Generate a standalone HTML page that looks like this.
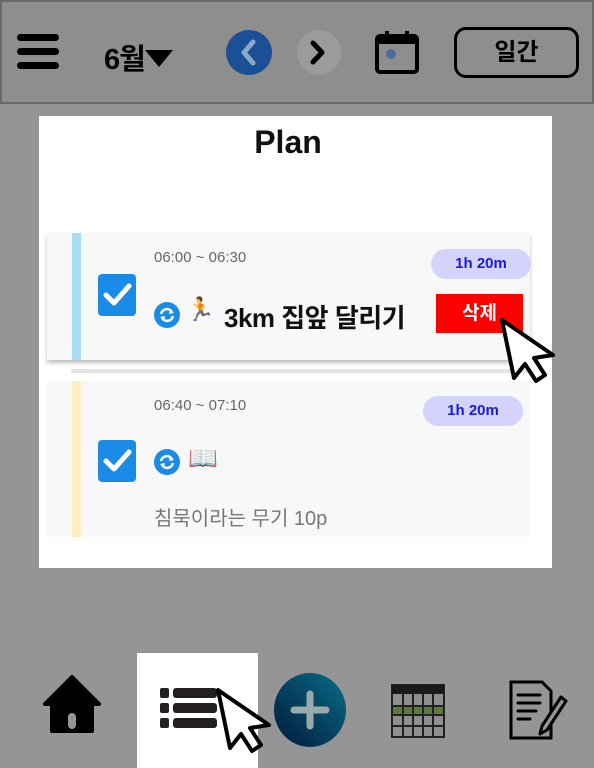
<!DOCTYPE html>
<html><head><meta charset="utf-8"><style>
*{margin:0;padding:0;box-sizing:border-box}
body{width:594px;height:768px;background:#959595;position:relative;overflow:hidden;font-family:"Liberation Sans","Noto Sans CJK KR",sans-serif}
.abs{position:absolute}
.hdr{left:0;top:0;width:594px;height:104px;background:#8e8e8e;border:2px solid #6a6a6a}
.panel{left:39px;top:116px;width:513px;height:452px;background:#fff}
.card{background:#f8f8f8}
.chk{width:38px;height:42px;background:#1a8ce8;border-radius:4px}
.pill{background:#d3d3fb;color:#1a1ae0;font-weight:bold;font-size:15px;text-align:center;border-radius:15px}
.time{color:#666;font-size:15px}
</style></head><body>
<div class="abs hdr"></div>
<div class="abs" style="left:17px;top:34px;width:42px;height:7px;background:#000;border-radius:4px"></div>
<div class="abs" style="left:17px;top:48px;width:42px;height:7px;background:#000;border-radius:4px"></div>
<div class="abs" style="left:17px;top:62px;width:42px;height:7px;background:#000;border-radius:4px"></div>
<div class="abs" style="left:104px;top:36px;font-size:29px;font-weight:bold;color:#000;letter-spacing:-1px">6월</div>
<svg class="abs" style="left:145px;top:50px" width="28" height="18"><path d="M0 0H28L14 17Z" fill="#000"/></svg>
<div class="abs" style="left:226px;top:30px;width:46px;height:45px;border-radius:50%;background:#1b5096"></div>
<svg class="abs" style="left:226px;top:30px" width="46" height="45"><path d="M27 12L18 22.5L27 33" stroke="#8aa7cb" stroke-width="5" fill="none" stroke-linecap="round" stroke-linejoin="round"/></svg>
<div class="abs" style="left:297px;top:30px;width:44px;height:45px;border-radius:50%;background:#9b9b9b"></div>
<svg class="abs" style="left:297px;top:30px" width="44" height="45"><path d="M16 13L25 22.5L16 32" stroke="#000" stroke-width="5" fill="none" stroke-linecap="round" stroke-linejoin="round"/></svg>
<svg class="abs" style="left:375px;top:30px" width="46" height="44"><rect x="2" y="6" width="40" height="36" rx="3" fill="none" stroke="#000" stroke-width="4"/><rect x="2" y="6" width="40" height="8" fill="#000"/><rect x="10" y="1" width="4" height="10" fill="#000"/><rect x="30" y="1" width="4" height="10" fill="#000"/><circle cx="16" cy="24" r="5" fill="#4a6f9c"/></svg>
<div class="abs" style="left:454px;top:27px;width:125px;height:51px;border:3px solid #000;border-radius:12px;text-align:center;line-height:45px;font-size:24px;font-weight:bold">일간</div>

<div class="abs panel"></div>
<div class="abs" style="left:39px;top:124px;width:498px;text-align:center;font-size:32px;font-weight:bold;color:#111">Plan</div>

<div class="abs card" style="left:47px;top:233px;width:483px;height:127px;box-shadow:0 3px 4px rgba(0,0,0,.25)"></div>
<div class="abs" style="left:72px;top:233px;width:9px;height:127px;background:#a9dff6"></div>
<div class="abs" style="left:71px;top:369px;width:459px;height:4px;background:#e4e4e4"></div>
<div class="abs time" style="left:154px;top:249px">06:00 ~ 06:30</div>
<div class="abs pill" style="left:431px;top:249px;width:100px;height:30px;line-height:30px">1h 20m</div>
<div class="abs chk" style="left:98px;top:274px"></div>
<svg class="abs" style="left:98px;top:274px" width="38" height="42"><path d="M8 21L16 29L31 12" stroke="#fff" stroke-width="5" fill="none" stroke-linecap="round" stroke-linejoin="round"/></svg>
<svg class="abs" style="left:154px;top:302px" width="26" height="26"><circle cx="13" cy="13" r="13" fill="#1a8ce8"/><path d="M7 12A6 6 0 0 1 18 10M19 14A6 6 0 0 1 8 16" stroke="#fff" stroke-width="2.5" fill="none"/><path d="M16 7L20 11L15 12Z M10 19L6 15L11 14Z" fill="#fff"/></svg>
<div class="abs" style="left:186px;top:296px;font-size:23px">🏃</div>
<div class="abs" style="left:224px;top:298px;font-size:26px;font-weight:bold;color:#111;letter-spacing:-0.5px">3km 집앞 달리기</div>
<div class="abs" style="left:436px;top:294px;width:87px;height:39px;background:#ff0000;color:#fff;font-size:19px;font-weight:bold;text-align:center;line-height:39px">삭제</div>
<svg class="abs" style="left:498px;top:316px" width="62" height="70"><path d="M4 4L16 62L27 48L38 65L47 59L36 42L55 39Z" fill="#fff" stroke="#000" stroke-width="4" stroke-linejoin="round"/></svg>

<div class="abs card" style="left:47px;top:381px;width:483px;height:156px"></div>
<div class="abs" style="left:72px;top:381px;width:9px;height:156px;background:#fcefc0"></div>
<div class="abs time" style="left:154px;top:397px">06:40 ~ 07:10</div>
<div class="abs pill" style="left:423px;top:396px;width:100px;height:30px;line-height:30px">1h 20m</div>
<div class="abs chk" style="left:98px;top:440px"></div>
<svg class="abs" style="left:98px;top:440px" width="38" height="42"><path d="M8 21L16 29L31 12" stroke="#fff" stroke-width="5" fill="none" stroke-linecap="round" stroke-linejoin="round"/></svg>
<svg class="abs" style="left:154px;top:449px" width="26" height="26"><circle cx="13" cy="13" r="13" fill="#1a8ce8"/><path d="M7 12A6 6 0 0 1 18 10M19 14A6 6 0 0 1 8 16" stroke="#fff" stroke-width="2.5" fill="none"/><path d="M16 7L20 11L15 12Z M10 19L6 15L11 14Z" fill="#fff"/></svg>
<div class="abs" style="left:188px;top:444px;font-size:24px">📖</div>
<div class="abs" style="left:154px;top:502px;font-size:20px;color:#777">침묵이라는 무기 10p</div>

<div class="abs" style="left:137px;top:653px;width:121px;height:115px;background:#fff"></div>
<svg class="abs" style="left:42px;top:675px" width="60" height="60"><path d="M30 2L57 29L50 29V56H10V29H3Z" fill="#000" stroke="#000" stroke-width="4" stroke-linejoin="round"/><rect x="26" y="38" width="8" height="16" rx="4" fill="#959595"/></svg>
<svg class="abs" style="left:160px;top:687px" width="60" height="45"><g fill="#231f20"><rect x="0" y="1" width="9" height="10" rx="2"/><rect x="13" y="1" width="44" height="10" rx="3"/><rect x="0" y="16" width="9" height="10" rx="2"/><rect x="13" y="16" width="44" height="10" rx="3"/><rect x="0" y="31" width="9" height="10" rx="2"/><rect x="13" y="31" width="44" height="10" rx="3"/></g></svg>
<svg class="abs" style="left:273px;top:672px" width="74" height="76"><defs><linearGradient id="g" x1="1" y1="0" x2="0" y2="1"><stop offset="0" stop-color="#076d88"/><stop offset="1" stop-color="#021a3a"/></linearGradient></defs><ellipse cx="37" cy="38" rx="36" ry="37" fill="url(#g)"/><path d="M37 22V54M21 38H53" stroke="#9aa" stroke-width="7" stroke-linecap="round"/></svg>
<svg class="abs" style="left:214px;top:686px" width="62" height="70"><path d="M4 4L16 62L27 48L38 65L47 59L36 42L55 39Z" fill="#fff" stroke="#000" stroke-width="4" stroke-linejoin="round"/></svg>
<svg class="abs" style="left:391px;top:684px" width="56" height="54"><rect x="1" y="1" width="52" height="52" fill="#8f8f8f" stroke="#222" stroke-width="2"/><rect x="1" y="1" width="52" height="9" fill="#1a1a1a"/><rect x="2" y="22" width="50" height="9" fill="#5d7a3a"/><g stroke="#222" stroke-width="2"><path d="M12 10V53M22 10V53M32 10V53M42 10V53M1 22H53M1 31H53M1 42H53"/></g></svg>
<svg class="abs" style="left:508px;top:680px" width="62" height="62"><path d="M3 2H34L43 11V58H3Z" fill="none" stroke="#000" stroke-width="3"/><path d="M10 15H32M10 23H32M10 31H28M10 39H22" stroke="#000" stroke-width="3" stroke-linecap="round"/><path d="M53 17L58 21L39 50L32 54L34 46Z" fill="#959595" stroke="#000" stroke-width="3" stroke-linejoin="round"/></svg>
</body></html>
